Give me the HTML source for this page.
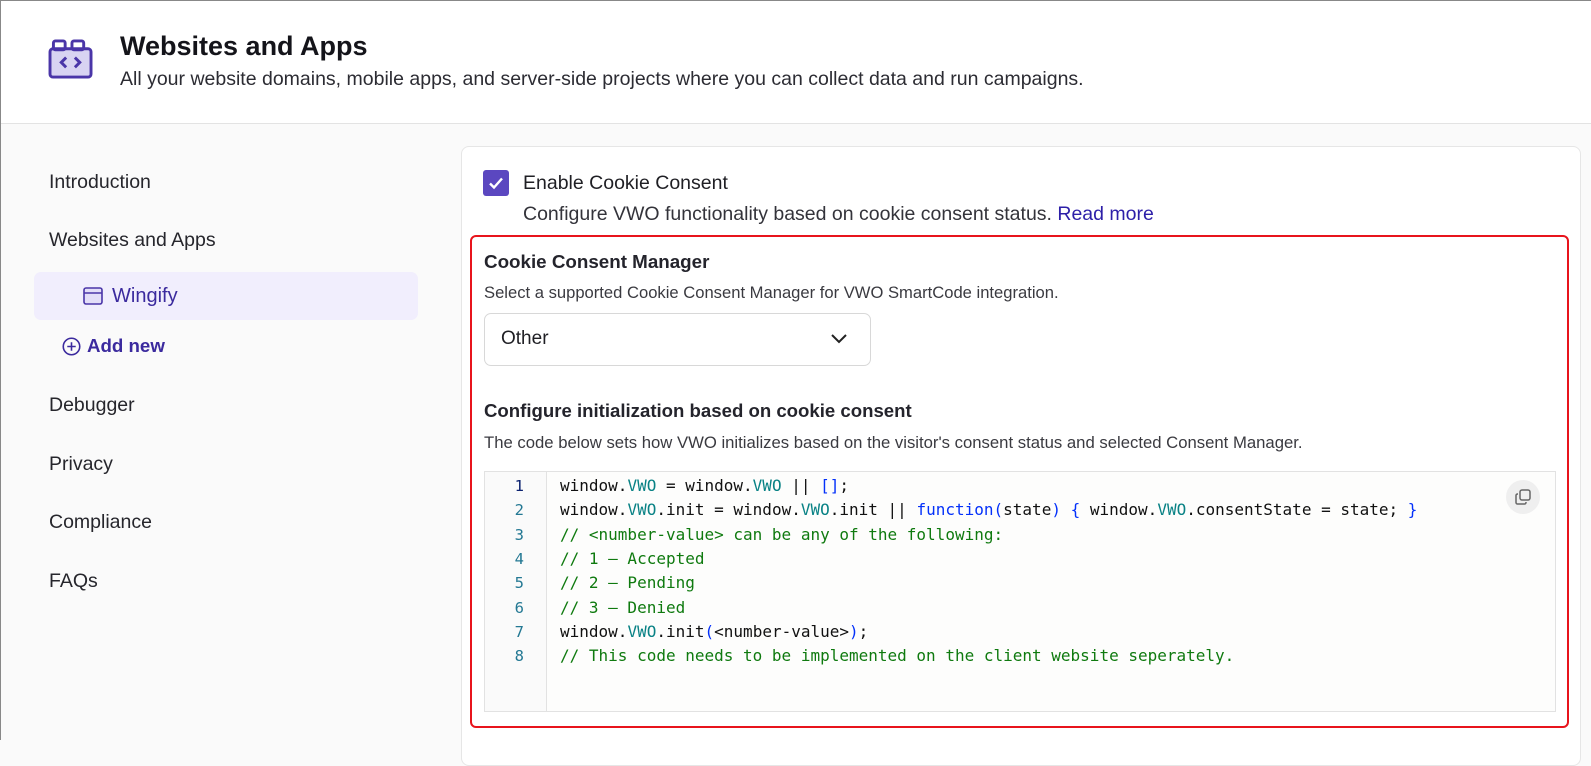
<!DOCTYPE html>
<html><head><meta charset="utf-8"><style>
*{box-sizing:border-box;margin:0;padding:0}
body{width:1591px;height:740px;overflow:hidden;background:#fafafa;font-family:"Liberation Sans",sans-serif;color:#1f1f24;position:relative}
.frame{position:absolute;left:0;top:0;width:1591px;height:740px;border-left:1.5px solid #888;border-top:1.5px solid #888;pointer-events:none}
.hdr{position:absolute;left:0;top:0;width:1591px;height:124px;background:#fff;border-bottom:1px solid #e3e3e3}
.tx{position:absolute;height:24px;line-height:24px;white-space:nowrap}
.nav{position:absolute;left:49px;height:24px;line-height:24px;font-size:19.5px;color:#26262c}
.sel{position:absolute;left:34px;top:272px;width:384px;height:48px;background:#f1eefd;border-radius:7px}
.card{position:absolute;left:461px;top:146px;width:1120px;height:620px;background:#fff;border:1px solid #e6e6e6;border-radius:8px}
.red{position:absolute;left:470px;top:235px;width:1099px;height:493px;border:2px solid #e8141c;border-radius:6px}
.code{position:absolute;left:484px;top:471px;width:1072px;height:241px;background:#fdfdfc;border:1px solid #e2e2e2}
.gut{position:absolute;left:0;top:0;width:62px;height:239px;border-right:1px solid #e2e2e2;background:#fafafa}
.ln{position:absolute;left:0;width:39px;text-align:right;font-family:"DejaVu Sans Mono",monospace;font-size:15.5px;color:#237893;height:20px;line-height:20px}
.cl{position:absolute;left:75px;font-family:"DejaVu Sans Mono",monospace;font-size:16px;color:#111;white-space:pre;height:20px;line-height:20px}
.t{color:#098285}.b{color:#0431fa}.c{color:#0f7a0f}
</style></head><body>
<div class="hdr">
<svg style="position:absolute;left:48px;top:39px" width="46" height="41" viewBox="0 0 46 42"><rect x="1.5" y="10" width="42" height="29" rx="3" fill="#d8d3f2" stroke="#4a35a8" stroke-width="3"/><rect x="5" y="2" width="12" height="9" rx="2" fill="none" stroke="#4a35a8" stroke-width="3"/><rect x="24" y="2" width="12" height="9" rx="2" fill="none" stroke="#4a35a8" stroke-width="3"/><path d="M18 19l-5 5 5 5M27 19l5 5-5 5" fill="none" stroke="#4a35a8" stroke-width="3"/></svg>
<div class="tx" style="left:120px;top:31px;height:30px;line-height:30px;font-size:27px;font-weight:bold;color:#14141a">Websites and Apps</div>
<div class="tx" style="left:120px;top:67px;font-size:19.5px;color:#2c2c33">All your website domains, mobile apps, and server-side projects where you can collect data and run campaigns.</div>
</div>
<div class="nav" style="top:170px">Introduction</div>
<div class="nav" style="top:228px">Websites and Apps</div>
<div class="sel"></div>
<svg style="position:absolute;left:83px;top:287px" width="20" height="18" viewBox="0 0 20 18"><rect x="1" y="1" width="18" height="16" rx="2" fill="#e3def8" stroke="#4a35a8" stroke-width="1.6"/><line x1="1" y1="6" x2="19" y2="6" stroke="#4a35a8" stroke-width="1.5"/></svg>
<div class="nav" style="left:112px;top:284px;color:#3b2a9e;font-size:20px">Wingify</div>
<svg style="position:absolute;left:62px;top:337px" width="19" height="19" viewBox="0 0 18 18"><circle cx="9" cy="9" r="7.8" fill="none" stroke="#3b2a9e" stroke-width="1.5"/><path d="M9 5v8M5 9h8" stroke="#3b2a9e" stroke-width="1.5"/></svg>
<div class="nav" style="left:87px;top:334px;color:#3b2a9e;font-weight:bold;font-size:18.7px">Add new</div>
<div class="nav" style="top:393px">Debugger</div>
<div class="nav" style="top:452px">Privacy</div>
<div class="nav" style="top:510px">Compliance</div>
<div class="nav" style="top:569px">FAQs</div>
<div class="card"></div>
<div style="position:absolute;left:483px;top:170px;width:26px;height:26px;background:#5b47c0;border-radius:3px"></div>
<svg style="position:absolute;left:483px;top:170px" width="26" height="26"><path d="M7 13.5l4 4 8-9" fill="none" stroke="#fff" stroke-width="2.4"/></svg>
<div class="tx" style="left:523px;top:171px;font-size:19.5px">Enable Cookie Consent</div>
<div class="tx" style="left:523px;top:202px;font-size:19.5px;color:#33333a">Configure VWO functionality based on cookie consent status. <span style="color:#2d1fa8">Read more</span></div>
<div class="red"></div>
<div class="tx" style="left:484px;top:250px;font-size:18.8px;font-weight:bold;color:#24242c">Cookie Consent Manager</div>
<div class="tx" style="left:484px;top:281px;font-size:16.6px;color:#3a3a40">Select a supported Cookie Consent Manager for VWO SmartCode integration.</div>
<div style="position:absolute;left:484px;top:313px;width:387px;height:53px;border:1px solid #d8d8d8;border-radius:7px;background:#fff"></div>
<div class="tx" style="left:501px;top:327px;font-size:19px">Other</div>
<svg style="position:absolute;left:830px;top:333px" width="18" height="12"><path d="M2 2l7 7 7-7" fill="none" stroke="#222" stroke-width="2"/></svg>
<div class="tx" style="left:484px;top:399px;font-size:18.6px;font-weight:bold;color:#24242c">Configure initialization based on cookie consent</div>
<div class="tx" style="left:484px;top:431px;font-size:16.7px;color:#3a3a40">The code below sets how VWO initializes based on the visitor's consent status and selected Consent Manager.</div>
<div class="code"><div class="gut"></div>
<div class="ln" style="top:4px;color:#0b216f">1</div><div class="ln" style="top:28px">2</div><div class="ln" style="top:53px">3</div><div class="ln" style="top:77px">4</div><div class="ln" style="top:101px">5</div><div class="ln" style="top:126px">6</div><div class="ln" style="top:150px">7</div><div class="ln" style="top:174px">8</div>
<div class="cl" style="top:4px">window.<span class="t">VWO</span> = window.<span class="t">VWO</span> || <span class="b">[]</span>;</div>
<div class="cl" style="top:28px">window.<span class="t">VWO</span>.init = window.<span class="t">VWO</span>.init || <span class="b">function(</span>state<span class="b">)</span> <span class="b">{</span> window.<span class="t">VWO</span>.consentState = state; <span class="b">}</span></div>
<div class="cl c" style="top:53px">// &lt;number-value&gt; can be any of the following:</div>
<div class="cl c" style="top:77px">// 1 – Accepted</div>
<div class="cl c" style="top:101px">// 2 – Pending</div>
<div class="cl c" style="top:126px">// 3 – Denied</div>
<div class="cl" style="top:150px">window.<span class="t">VWO</span>.init<span class="b">(</span>&lt;number-value&gt;<span class="b">)</span>;</div>
<div class="cl c" style="top:174px">// This code needs to be implemented on the client website seperately.</div>
<div style="position:absolute;left:1021px;top:8px;width:34px;height:34px;border-radius:50%;background:#efefef"></div>
<svg style="position:absolute;left:1029px;top:16px" width="18" height="18" viewBox="0 0 18 18"><rect x="6" y="2" width="10" height="10" rx="2" fill="none" stroke="#666" stroke-width="1.5"/><path d="M4 6H3.5A1.5 1.5 0 0 0 2 7.5v7A1.5 1.5 0 0 0 3.5 16h7a1.5 1.5 0 0 0 1.5-1.5V14" fill="none" stroke="#666" stroke-width="1.5"/></svg>
</div>
<div class="frame"></div>
</body></html>
